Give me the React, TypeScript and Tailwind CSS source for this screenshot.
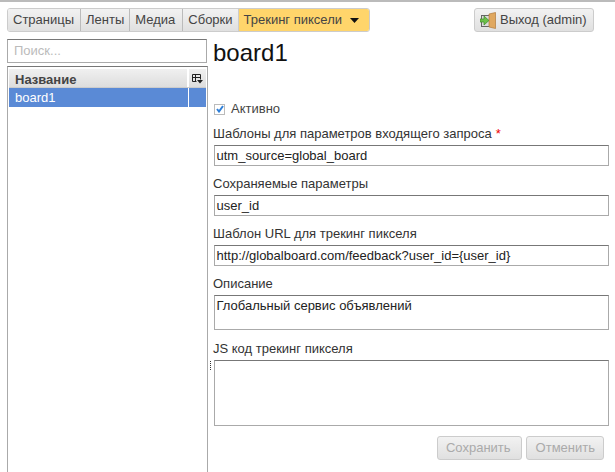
function Field({ label, value, req }: { label: string; value: string; req?: boolean }) {
  return (
    <div className="flex flex-col">
      <div className="h-[21px] -ml-[1px] text-[13px] leading-[20px] text-[#333]">
        {label}
        {req && <span className="text-[#e00] ml-[4px]">*</span>}
      </div>
      <div className="h-[21px] w-[395px] border border-[#aaa] border-t-[#777] bg-white px-[1.5px] text-[13px] leading-[19px] text-[#222]">{value}</div>
    </div>
  );
}

function Seg({ children, active, cls }: { children: React.ReactNode; active?: boolean; cls: string }) {
  return (
    <div className={`h-full flex items-center border-l ${cls} ${active ? "bg-[#ffd56b] text-[#444] border-l-[#ccc]" : "bg-gradient-to-b from-[#f2f2f2] to-[#e0e0e0] text-[#444] border-l-[#bbb]"}`}>
      {children}
    </div>
  );
}

export default function App() {
  return (
    <div className="w-[615px] h-[472px] overflow-hidden bg-white border-t-2 border-[#bbb] flex flex-col text-[13px]" style={{ fontFamily: '"Liberation Sans", Arial, sans-serif' }}>
      <div className="flex justify-between items-start pl-[7px] pr-[21px] pt-[6px] h-[37px]">
        <div className="flex h-[24px] items-center border border-[#ccc] rounded-[3px] overflow-hidden">
          <Seg cls="border-l-0 pl-[5px] pr-[6px]">Страницы</Seg>
          <Seg cls="px-[5px]">Ленты</Seg>
          <Seg cls="pl-[5px] pr-[7px]">Медиа</Seg>
          <Seg cls="px-[5px]">Сборки</Seg>
          <Seg active cls="pl-[5px]">
            <span>Трекинг пиксели</span>
            <svg width="9" height="5" viewBox="0 0 9 5" className="ml-[8px] mr-[10px]"><path d="M0 0h9L4.500 5z" fill="#111" /></svg>
          </Seg>
        </div>
        <div className="flex h-[24px] w-[120px] items-center gap-[4px] pl-[5px] border border-[#ccc] rounded-[3px] bg-gradient-to-b from-[#f2f2f2] to-[#e0e0e0] text-[#444]">
          <svg width="16" height="17" viewBox="0 0 16 17">
            <rect x="1.500" y="3.500" width="8" height="11" fill="#dcdcdc" stroke="#666" strokeWidth="1" />
            <path d="M9 2l6.500-1.500v16L9 15z" fill="#e0a860" stroke="#b07a3c" strokeWidth="0.7" />
            <path d="M0 7h4V4l5 4.500L4 13v-3H0z" fill="#6cc04a" stroke="#3f8a2a" strokeWidth="0.7" />
          </svg>
          <span className="whitespace-nowrap">Выход (admin)</span>
        </div>
      </div>
      <div className="flex flex-1 min-h-0 pl-[7px]">
        <div className="w-[201px] flex flex-col">
          <div className="h-[24px] w-[200px] border border-[#aaa] border-t-[#777] px-[6px] text-[13px] leading-[22px] text-[#bbb]">Поиск...</div>
          <div className="mt-[3px] flex-1 w-[201px] border border-[#aaa] border-t-[#777] border-b-0 pt-[2px] px-[1px]">
            <div className="flex h-[19px] border-b border-[#ccc] bg-gradient-to-b from-[#f0f0f0] to-[#ddd]">
              <div className="flex-1 pl-[6px] pt-[2px] text-[13px] leading-[17px] font-bold text-[#444]">Название</div>
              <div className="w-[19px] border-l-2 border-white flex items-center justify-center">
                <svg width="11" height="11" viewBox="0 0 11 11"><path d="M.5 1.500h8v5M.5 1.500v7h4M3.500 1.500v7M.5 4.500h8" fill="none" stroke="#222" /><path d="M5 7h6L8 10.500z" fill="#222" /></svg>
              </div>
            </div>
            <div className="flex h-[19px] bg-[#5a8ad6] text-white">
              <div className="flex-1 pl-[6px] leading-[19px]">board1</div>
              <div className="w-[18px] border-l border-white" />
            </div>
          </div>
        </div>
        <div className="relative w-[6px]">
          <div className="absolute left-[2px] top-[322px] w-[1px] h-[9px] border-l border-dotted border-[#333]" />
        </div>
        <div className="flex flex-col pb-[6px]">
          <div className="h-[28px] -ml-[1px] text-[24px] leading-[28px] text-[#111]">board1</div>
          <div className="mt-[32px] h-[20px] flex items-center gap-[6px] text-[#444]">
            <div className="w-[11px] h-[11px] border border-[#bbb] flex items-center justify-center">
              <svg width="8" height="8" viewBox="0 0 8 8"><path d="M1 4l2 2.500L7 1" fill="none" stroke="#2f7fd8" strokeWidth="2" /></svg>
            </div>
            <span>Активно</span>
          </div>
          <div className="mt-[5px] flex flex-col gap-[8px]">
            <Field label="Шаблоны для параметров входящего запроса" value="utm_source=global_board" req />
            <Field label="Сохраняемые параметры" value="user_id" />
            <Field label="Шаблон URL для трекинг пикселя" value="http://globalboard.com/feedback?user_id={user_id}" />
            <div className="flex flex-col">
              <div className="h-[21px] -ml-[1px] leading-[20px] text-[#333]">Описание</div>
              <div className="h-[35px] w-[395px] border border-[#aaa] border-t-[#777] px-[1.5px] leading-[19px] text-[#222]">Глобальный сервис объявлений</div>
            </div>
            <div className="flex flex-col mt-[1px]">
              <div className="h-[21px] -ml-[1px] leading-[20px] text-[#333]">JS код трекинг пикселя</div>
              <div className="h-[66px] w-[395px] border border-[#aaa] border-t-[#777]" />
            </div>
          </div>
          <div className="mt-[10px] w-[390px] flex justify-end gap-[4px] text-[#aaa]">
            <div className="h-[24px] pl-[8px] pr-[10px] flex items-center border border-[#ccc] rounded-[3px] bg-gradient-to-b from-[#f2f2f2] to-[#e0e0e0]">Сохранить</div>
            <div className="h-[24px] pl-[9px] pr-[8px] flex items-center border border-[#ccc] rounded-[3px] bg-gradient-to-b from-[#f2f2f2] to-[#e0e0e0]">Отменить</div>
          </div>
        </div>
      </div>
    </div>
  );
}
